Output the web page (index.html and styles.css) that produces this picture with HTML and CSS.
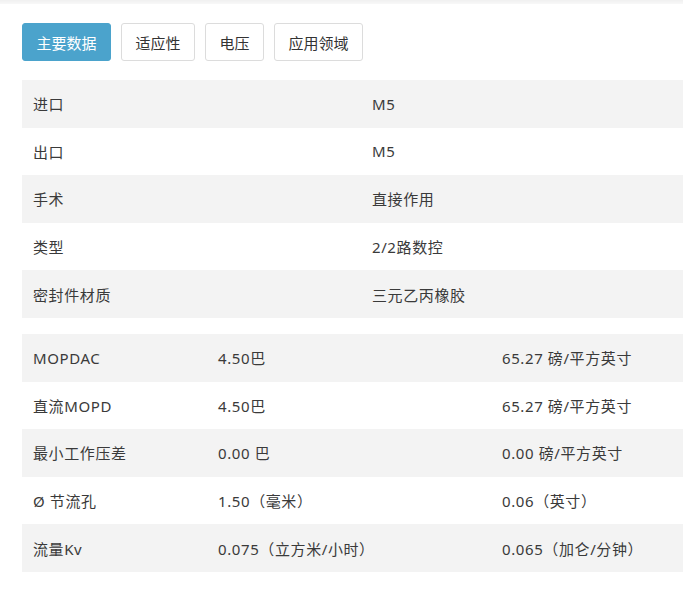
FILE: index.html
```html
<!DOCTYPE html>
<html lang="zh">
<head>
<meta charset="utf-8">
<link rel="stylesheet" href="styles.css">
</head>
<body>
<div class="topbar"></div>
<div class="page">
  <div class="tabs">
    <div class="tab active">主要数据</div>
    <div class="tab">适应性</div>
    <div class="tab">电压</div>
    <div class="tab">应用领域</div>
  </div>
  <div class="table t2">
    <div class="row"><div class="cell">进口</div><div class="cell">M5</div></div>
    <div class="row"><div class="cell">出口</div><div class="cell">M5</div></div>
    <div class="row"><div class="cell">手术</div><div class="cell">直接作用</div></div>
    <div class="row"><div class="cell">类型</div><div class="cell">2/2路数控</div></div>
    <div class="row"><div class="cell">密封件材质</div><div class="cell">三元乙丙橡胶</div></div>
  </div>
  <div class="table t3">
    <div class="row"><div class="cell">MOPDAC</div><div class="cell">4.50巴</div><div class="cell">65.27 磅/平方英寸</div></div>
    <div class="row"><div class="cell">直流MOPD</div><div class="cell">4.50巴</div><div class="cell">65.27 磅/平方英寸</div></div>
    <div class="row"><div class="cell">最小工作压差</div><div class="cell">0.00 巴</div><div class="cell">0.00 磅/平方英寸</div></div>
    <div class="row"><div class="cell">Ø 节流孔</div><div class="cell">1.50（毫米）</div><div class="cell">0.06（英寸）</div></div>
    <div class="row"><div class="cell">流量Kv</div><div class="cell">0.075（立方米/小时）</div><div class="cell">0.065（加仑/分钟）</div></div>
  </div>
</div>
</body>
</html>
```
FILE: styles.css
```css
html, body {
  margin: 0;
  padding: 0;
  background: #fff;
  overflow-x: hidden;
}
body {
  font-family: "Noto Sans", "Noto Sans CJK SC", sans-serif;
  font-size: 15px;
  color: #333;
}
.topbar {
  height: 4px;
  background: linear-gradient(#f0f0f0, #f8f8f8);
}
.page {
  padding-left: 22px;
  width: 678px;
}
.tabs {
  display: flex;
  gap: 10px;
  margin-top: 19px;
}
.tab {
  height: 38px;
  box-sizing: border-box;
  border: 1px solid #dcdcdc;
  border-radius: 3px;
  padding: 0 13.5px;
  display: flex;
  align-items: center;
  color: #333;
  background: #fff;
}
.tab.active {
  background: #4ba3cc;
  border-color: #4ba3cc;
  color: #fff;
}
.table {
  margin-top: 19px;
}
.table.t3 {
  margin-top: 16px;
}
.row {
  display: grid;
  height: 47.6px;
  align-items: center;
}
.t2 .row {
  grid-template-columns: 339px 339px;
}
.t3 .row {
  grid-template-columns: 185px 284px 209px;
}
.row:nth-child(odd) {
  background: #f3f3f3;
}
.cell {
  padding: 0 11px;
  white-space: nowrap;
  letter-spacing: 0.6px;
  color: #3a3a3a;
}
```
